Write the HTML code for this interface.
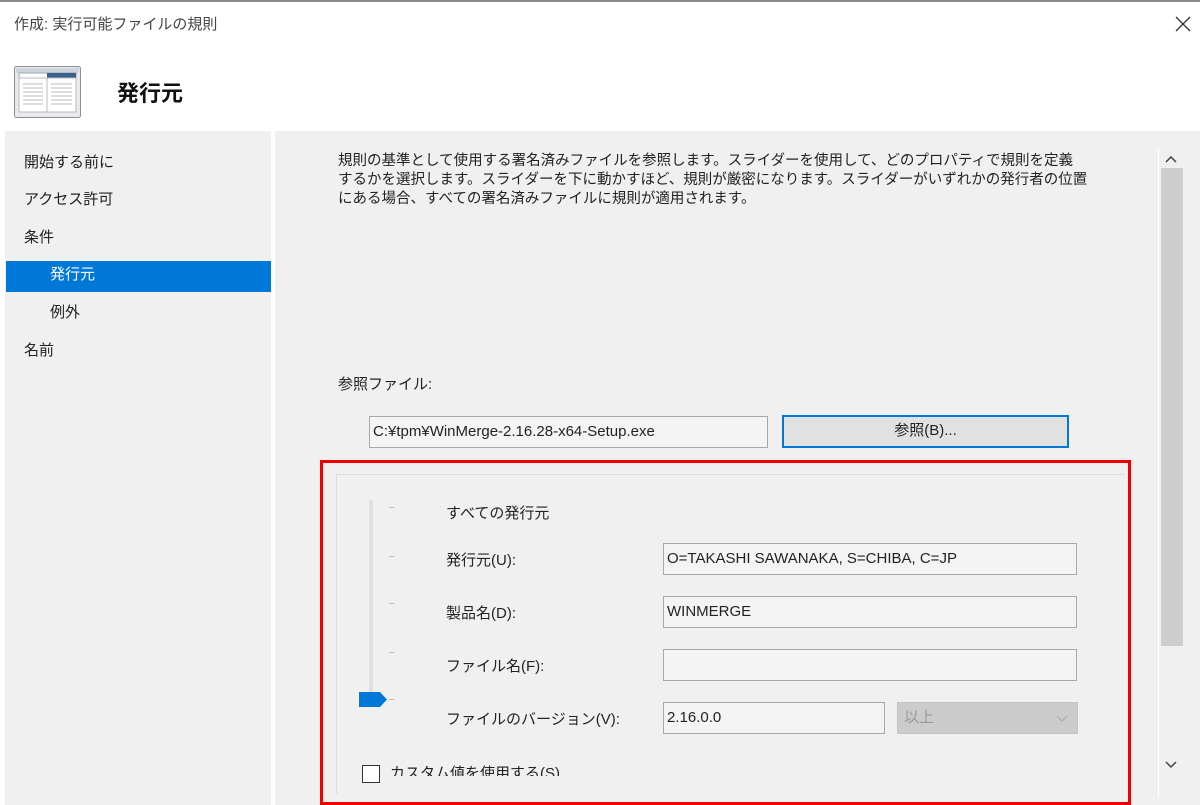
<!DOCTYPE html>
<html><head><meta charset="utf-8"><style>
*{box-sizing:border-box;margin:0;padding:0}
body{width:1200px;height:805px;overflow:hidden;background:#fff;font-family:"Liberation Sans","Noto Sans CJK JP",sans-serif;color:#222;position:relative}
.a{position:absolute}
.t{font-size:15px;white-space:nowrap}
.box{position:absolute;border:1px solid #a8a8a8;background:#f4f4f4;font-size:15px;padding-left:3px;line-height:30px;color:#222}
</style></head><body>
<div class="a" style="left:0;top:0;width:1200px;height:2px;background:#888"></div>
<div class="a t" style="left:14px;top:13px;color:#444">作成: 実行可能ファイルの規則</div>
<svg class="a" style="left:1175px;top:16px" width="16" height="16"><path d="M1 1L15 15M15 1L1 15" stroke="#333" stroke-width="1.3"/></svg>
<svg class="a" style="left:14px;top:66px" width="68" height="52" viewBox="0 0 68 52">
<rect x="0.5" y="0.5" width="66" height="51" rx="2" fill="#e8eaee" stroke="#8a8e96"/>
<rect x="2" y="2" width="63" height="5" fill="#d0d4dc"/>
<rect x="5" y="7" width="57" height="5" fill="#fff" stroke="#9aa"/>
<rect x="33" y="7" width="29" height="5" fill="#3d5f8e"/>
<rect x="5" y="12" width="28" height="34" fill="#fff" stroke="#bbb"/>
<rect x="33" y="12" width="29" height="34" fill="#fff" stroke="#bbb"/>
<g stroke="#bbb"><line x1="9" y1="18" x2="29" y2="18"/><line x1="9" y1="22" x2="29" y2="22"/><line x1="9" y1="26" x2="29" y2="26"/><line x1="9" y1="30" x2="29" y2="30"/><line x1="9" y1="34" x2="29" y2="34"/><line x1="9" y1="38" x2="29" y2="38"/>
<line x1="37" y1="18" x2="58" y2="18"/><line x1="37" y1="22" x2="58" y2="22"/><line x1="37" y1="26" x2="58" y2="26"/><line x1="37" y1="30" x2="58" y2="30"/><line x1="37" y1="34" x2="58" y2="34"/><line x1="37" y1="38" x2="58" y2="38"/></g>
</svg>
<div class="a" style="left:117px;top:76px;font-size:22px;font-weight:bold;color:#111">発行元</div>
<div class="a" style="left:5px;top:131px;width:266px;height:674px;background:#f0f0f0"></div>
<div class="a" style="left:275px;top:131px;width:925px;height:674px;background:#f0f0f0"></div>
<div class="a t" style="left:24px;top:151px">開始する前に</div>
<div class="a t" style="left:24px;top:188px">アクセス許可</div>
<div class="a t" style="left:24px;top:226px">条件</div>
<div class="a" style="left:6px;top:261px;width:265px;height:31px;background:#0078d7"></div>
<div class="a t" style="left:50px;top:263px;color:#fff">発行元</div>
<div class="a t" style="left:50px;top:301px">例外</div>
<div class="a t" style="left:24px;top:339px">名前</div>
<div class="a" style="left:338px;top:152px;font-size:14.5px;line-height:19px;color:#222;white-space:nowrap">規則の基準として使用する署名済みファイルを参照します。スライダーを使用して、どのプロパティで規則を定義<br>するかを選択します。スライダーを下に動かすほど、規則が厳密になります。スライダーがいずれかの発行者の位置<br>にある場合、すべての署名済みファイルに規則が適用されます。</div>
<div class="a" style="left:1158px;top:148px;width:1px;height:650px;background:#fff"></div>
<div class="a" style="left:1161px;top:168px;width:22px;height:478px;background:#cdcdcd"></div>
<svg class="a" style="left:1165px;top:156px" width="12" height="8"><path d="M1 6L6 1L11 6" fill="none" stroke="#444" stroke-width="1.5"/></svg>
<svg class="a" style="left:1165px;top:761px" width="12" height="8"><path d="M1 1L6 6L11 1" fill="none" stroke="#444" stroke-width="1.5"/></svg>
<div class="a t" style="left:338px;top:373px">参照ファイル:</div>
<div class="box" style="left:369px;top:416px;width:399px;height:32px">C:¥tpm¥WinMerge-2.16.28-x64-Setup.exe</div>
<div class="a" style="left:782px;top:415px;width:287px;height:33px;border:2px solid #0078d7;background:#e1e1e1;text-align:center;line-height:28px;font-size:15px">参照(B)...</div>
<div class="a" style="left:336px;top:474px;width:789px;height:320px;border-top:1px solid #dcdcdc;border-left:1px solid #dcdcdc"></div>
<div class="a" style="left:369px;top:500px;width:4px;height:200px;background:#e0e0e0"></div>
<div class="a" style="left:389px;top:507px;width:5px;height:1px;background:#bbb"></div>
<div class="a" style="left:389px;top:556px;width:5px;height:1px;background:#bbb"></div>
<div class="a" style="left:389px;top:603px;width:5px;height:1px;background:#bbb"></div>
<div class="a" style="left:389px;top:652px;width:5px;height:1px;background:#bbb"></div>
<div class="a" style="left:389px;top:699px;width:5px;height:1px;background:#bbb"></div>
<svg class="a" style="left:359px;top:692px" width="30" height="16"><path d="M0 0H21L28 7.5L21 15H0Z" fill="#0078d7"/></svg>
<div class="a t" style="left:446px;top:502px">すべての発行元</div>
<div class="a t" style="left:446px;top:549px">発行元(U):</div>
<div class="a t" style="left:446px;top:602px">製品名(D):</div>
<div class="a t" style="left:446px;top:655px">ファイル名(F):</div>
<div class="a t" style="left:446px;top:708px">ファイルのバージョン(V):</div>
<div class="box" style="left:663px;top:543px;width:414px;height:32px">O=TAKASHI SAWANAKA, S=CHIBA, C=JP</div>
<div class="box" style="left:663px;top:596px;width:414px;height:32px">WINMERGE</div>
<div class="box" style="left:663px;top:649px;width:414px;height:32px"></div>
<div class="box" style="left:663px;top:702px;width:222px;height:32px">2.16.0.0</div>
<div class="a" style="left:897px;top:702px;width:181px;height:32px;background:#cccccc;border:1px solid #c4c4c4;font-size:15px;line-height:30px;padding-left:6px;color:#999">以上<svg style="position:absolute;right:9px;top:12px" width="12" height="8"><path d="M1 1L6 6L11 1" fill="none" stroke="#aaa" stroke-width="1.2"/></svg></div>
<div class="a" style="left:362px;top:765px;width:18px;height:18px;border:1px solid #333;background:#fff"></div>
<div class="a" style="left:390px;top:762px;height:14px;overflow:hidden;font-size:15px;white-space:nowrap">カスタム値を使用する(S)</div>
<div class="a" style="left:320px;top:460px;width:811px;height:345px;border:3px solid #ee0000"></div>
</body></html>
